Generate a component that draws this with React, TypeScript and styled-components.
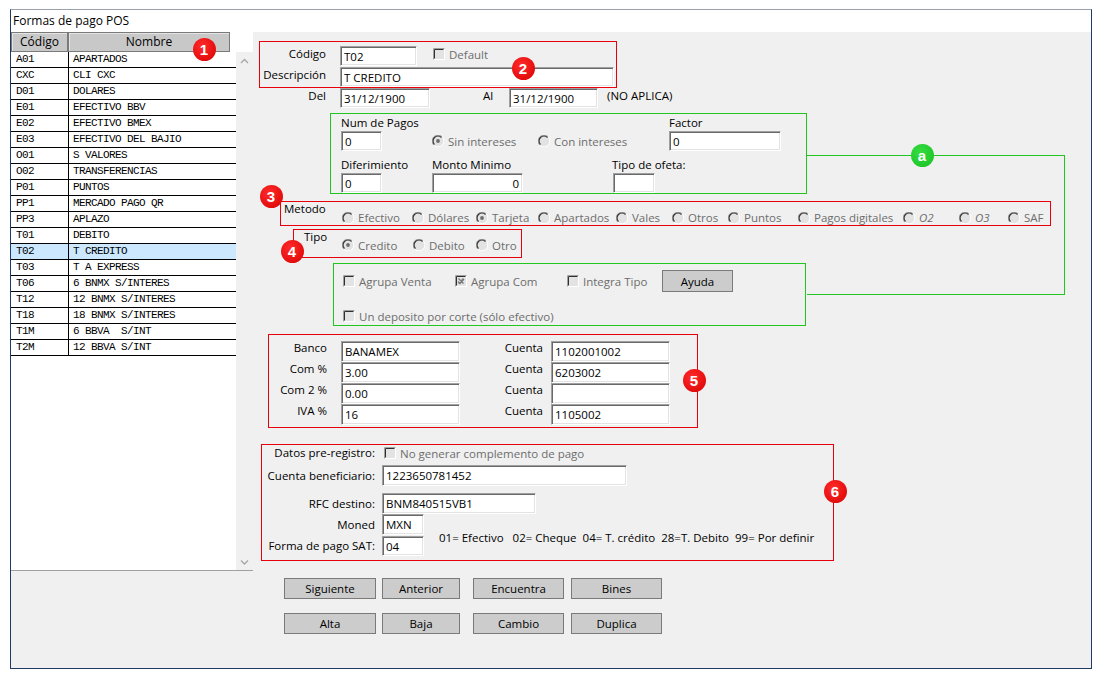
import { Fragment } from "react";
import styled, { createGlobalStyle } from "styled-components";

const GlobalStyle = createGlobalStyle`
  html, body {
    margin: 0;
    padding: 0;
    background: #ffffff;
  }
  body {
    font-family: "Open Sans", "Liberation Sans", sans-serif;
    font-size: 11.5px;
    color: #000000;
  }
  * {
    box-sizing: border-box;
  }
`;

const Window = styled.div`
  position: relative;
  margin: 9px 0 0 10px;
  width: 1082px;
  height: 660px;
  border: 1px solid #1f3b63;
  border-top-color: #9aa3ad;
  display: flex;
  flex-direction: column;
`;

const TitleBar = styled.div`
  height: 22px;
  line-height: 21px;
  padding-left: 2px;
  font-size: 12px;
  background: #ffffff;
`;

const Body = styled.div`
  flex: 1;
  display: flex;
  align-items: flex-start;
  background: #f0f0f0;
`;

/* ---------- left list ---------- */

const ListPanel = styled.div`
  width: 242px;
  height: 539px;
  background: #ffffff;
  display: flex;
  flex-direction: column;
  border-bottom: 1px solid #a0a0a0;
`;

const HeadRow = styled.div`
  display: flex;
  height: 20px;
`;

const HeadCell = styled.div<{ $w: number }>`
  width: ${(p) => p.$w}px;
  background: #c8c8c8;
  border: 1px solid #7a7a7a;
  box-shadow: inset 1px 1px 0 #e4e4e4;
  text-align: center;
  line-height: 18px;
  font-size: 12px;
`;

const ListBody = styled.div`
  flex: 1;
  display: flex;
`;

const Rows = styled.div`
  width: 225px;
`;

const Row = styled.div<{ $selected?: boolean }>`
  display: grid;
  grid-template-columns: 57px 1fr;
  height: 16px;
  border-bottom: 1px solid #000000;
  background: ${(p) => (p.$selected ? "#cce8ff" : "#ffffff")};
  font-family: "Liberation Mono", monospace;
  font-size: 11px;
  letter-spacing: -0.6px;
  line-height: 15px;
`;

const Cell = styled.div`
  padding-left: 5px;
  white-space: pre;
  & + & {
    border-left: 1px solid #000000;
    padding-left: 4px;
  }
`;

const ScrollTrack = styled.div`
  width: 17px;
  display: flex;
  flex-direction: column;
  justify-content: space-between;
  align-items: center;
  padding: 6px 0 5px;
  background: #f0f0f0;
`;

/* ---------- form ---------- */

const Form = styled.div`
  flex: 1;
  display: flex;
  flex-direction: column;
  align-items: flex-start;
`;

const RedBox = styled.div`
  border: 1px solid #e8000b;
`;

const GreenBox = styled.div`
  border: 1px solid #1fc71f;
`;

const Label = styled.span<{ $w?: number; $right?: boolean; $muted?: boolean; $italic?: boolean }>`
  flex: none;
  display: inline-block;
  width: ${(p) => (p.$w ? `${p.$w}px` : "auto")};
  text-align: ${(p) => (p.$right ? "right" : "left")};
  color: ${(p) => (p.$muted ? "#6d6d6d" : "#000000")};
  font-style: ${(p) => (p.$italic ? "italic" : "normal")};
  line-height: 16px;
  white-space: pre;
`;

const TextBox = styled.input<{ $w: number; $h?: number; $right?: boolean }>`
  flex: none;
  width: ${(p) => p.$w}px;
  height: ${(p) => p.$h ?? 20}px;
  margin: 0;
  padding: 0 3px;
  border: 1px solid;
  border-color: #a0a0a0 #ffffff #ffffff #a0a0a0;
  box-shadow: inset 1px 1px 0 #696969, inset -1px -1px 0 #e3e3e3;
  background: #ffffff;
  font: inherit;
  color: #000000;
  text-align: ${(p) => (p.$right ? "right" : "left")};
  outline: none;
`;

const CodeBox = styled(RedBox)`
  margin: 9px 0 0 6px;
  width: 358px;
  padding-top: 4px;
  display: flex;
  flex-direction: column;
  gap: 1px;
`;

const FieldRow = styled.div<{ $gap?: number }>`
  display: flex;
  align-items: flex-start;
  gap: ${(p) => p.$gap ?? 14}px;
`;

const DateRow = styled.div`
  display: flex;
  align-items: flex-start;
`;

const Spacer = styled.span<{ $w: number }>`
  flex: none;
  width: ${(p) => p.$w}px;
`;

const CreditBox = styled(GreenBox)`
  margin: 5px 0 0 77px;
  width: 477px;
  height: 81px;
  padding: 1px 0 0 10px;
`;

const CreditGrid = styled.div<{ $cols: string; $top?: number }>`
  display: grid;
  grid-template-columns: ${(p) => p.$cols};
  align-items: end;
  margin-top: ${(p) => p.$top ?? 0}px;
`;

const Stack = styled.div<{ $indent?: number }>`
  display: flex;
  flex-direction: column;
  align-items: flex-start;
  input {
    margin-left: ${(p) => p.$indent ?? 0}px;
  }
`;

const MethodBox = styled(RedBox)`
  margin: 7px 0 0 27px;
  width: 771px;
  height: 25px;
  padding-left: 3px;
  display: flex;
  align-items: flex-start;
  ${Label} {
    line-height: 14px;
  }
`;

const TypeBox = styled(RedBox)`
  margin: 3px 0 0 40px;
  width: 229px;
  height: 29px;
  padding-left: 10px;
  display: flex;
  align-items: flex-start;
  ${Label} {
    line-height: 14px;
  }
`;

const OptionGroup = styled.div<{ $top: number }>`
  display: flex;
  margin-top: ${(p) => p.$top}px;
`;

const Option = styled.label<{ $w?: number; $h?: number }>`
  flex: none;
  display: flex;
  align-items: center;
  gap: 4px;
  width: ${(p) => (p.$w ? `${p.$w}px` : "auto")};
  height: ${(p) => p.$h ?? 14}px;
  color: #6d6d6d;
  white-space: nowrap;
  svg {
    flex: none;
  }
`;

const OptionsBox = styled(GreenBox)`
  margin: 5px 0 0 80px;
  width: 473px;
  height: 63px;
  padding: 6px 0 0 9px;
`;

const OptionsLine = styled.div<{ $top?: number }>`
  display: flex;
  align-items: center;
  height: 22px;
  margin-top: ${(p) => p.$top ?? 0}px;
`;

const WinButton = styled.button<{ $w: number; $h?: number; $ml?: number }>`
  flex: none;
  width: ${(p) => p.$w}px;
  height: ${(p) => p.$h ?? 21}px;
  margin: 0 0 0 ${(p) => p.$ml ?? 0}px;
  padding: 0;
  background: #cccccc;
  border: 1px solid #7a7a7a;
  font: inherit;
  color: #000000;
`;

const BankBox = styled(RedBox)`
  margin: 8px 0 0 15px;
  width: 430px;
  height: 94px;
  padding: 6px 0 0 0;
  display: grid;
  grid-template-columns: 72px 119px 91px 119px;
  grid-auto-rows: 21px;
  ${Label} {
    line-height: 13px;
  }
`;

const GridLabel = styled(Label)<{ $pr: number }>`
  padding-right: ${(p) => p.$pr}px;
  align-self: start;
`;

const SatBox = styled(RedBox)`
  margin: 16px 0 0 8px;
  width: 573px;
  height: 117px;
  display: flex;
  flex-direction: column;
`;

const SatRow = styled.div<{ $top?: number }>`
  display: flex;
  align-items: center;
  margin-top: ${(p) => p.$top ?? 0}px;
`;

const SatLabel = styled(Label)`
  width: 120px;
  padding-right: 7px;
  text-align: right;
`;

const SatSplit = styled.div`
  display: flex;
  align-items: center;
`;

const SatColumn = styled.div`
  display: flex;
  flex-direction: column;
  gap: 1px;
`;

const Legend = styled.span`
  margin: 4px 0 0 15px;
  white-space: pre;
`;

const ButtonRow = styled.div<{ $top: number }>`
  display: flex;
  margin: ${(p) => p.$top}px 0 0 31px;
`;

/* ---------- annotations ---------- */

const Badge = styled.div<{ $x: number; $y: number; $green?: boolean }>`
  position: absolute;
  left: ${(p) => p.$x - 22.5}px;
  top: ${(p) => p.$y - 21.5}px;
  width: 23px;
  height: 23px;
  border-radius: 50%;
  background: ${(p) =>
    p.$green
      ? "radial-gradient(circle at 40% 35%, #36dc3f, #17c024)"
      : "radial-gradient(circle at 40% 35%, #ff2b2b, #d90000)"};
  color: #ffffff;
  font-family: "Liberation Sans", Arial, sans-serif;
  font-weight: bold;
  font-size: 15px;
  line-height: 23px;
  text-align: center;
`;

const Connector = styled.div`
  position: absolute;
  left: 796px;
  top: 145px;
  width: 258px;
  height: 140px;
  border: 1px solid #1fc71f;
  border-left: none;
`;

function RadioMark({ on }: { on?: boolean }) {
  return (
    <svg width="12" height="12" viewBox="0 0 12 12">
      <circle cx="6" cy="6" r="5.5" fill="#e3e3e3" />
      <path d="M10.2 1.8 A5.9 5.9 0 0 0 1.8 10.2" fill="none" stroke="#a0a0a0" strokeWidth="1" />
      <path d="M9.5 2.5 A4.9 4.9 0 0 0 2.5 9.5" fill="none" stroke="#303030" strokeWidth="1.1" />
      <path d="M1.8 10.2 A5.9 5.9 0 0 0 10.2 1.8" fill="none" stroke="#ffffff" strokeWidth="1" />
      {on && <circle cx="6" cy="6" r="1.9" fill="#6d6d6d" />}
    </svg>
  );
}

function CheckMark({ on }: { on?: boolean }) {
  return (
    <svg width="12" height="12" viewBox="0 0 12 12">
      <rect x="0" y="0" width="12" height="12" fill="#ffffff" />
      <rect x="1" y="1" width="10" height="10" fill="#e3e3e3" />
      <path d="M0.5 11.5 V0.5 H11.5" fill="none" stroke="#a0a0a0" />
      <path d="M1.5 10.5 V1.5 H10.5" fill="none" stroke="#303030" />
      {on && <path d="M3.5 3.5 L8.5 8.5 M8.5 3.5 L3.5 8.5 M3 6.5 L5 8.5 L9 4" fill="none" stroke="#7a7a7a" strokeWidth="1.3" />}
    </svg>
  );
}

function Chevron({ down }: { down?: boolean }) {
  return (
    <svg width="9" height="6" viewBox="0 0 9 6">
      <path d={down ? "M1 1.5 L4.5 5 L8 1.5" : "M1 5 L4.5 1.5 L8 5"} fill="none" stroke="#a6a6a6" strokeWidth="1.3" />
    </svg>
  );
}

interface IPayment {
  code: string;
  name: string;
}

const payments: IPayment[] = [
  { code: "A01", name: "APARTADOS" },
  { code: "CXC", name: "CLI CXC" },
  { code: "D01", name: "DOLARES" },
  { code: "E01", name: "EFECTIVO BBV" },
  { code: "E02", name: "EFECTIVO BMEX" },
  { code: "E03", name: "EFECTIVO DEL BAJIO" },
  { code: "O01", name: "S VALORES" },
  { code: "O02", name: "TRANSFERENCIAS" },
  { code: "P01", name: "PUNTOS" },
  { code: "PP1", name: "MERCADO PAGO QR" },
  { code: "PP3", name: "APLAZO" },
  { code: "T01", name: "DEBITO" },
  { code: "T02", name: "T CREDITO" },
  { code: "T03", name: "T A EXPRESS" },
  { code: "T06", name: "6 BNMX S/INTERES" },
  { code: "T12", name: "12 BNMX S/INTERES" },
  { code: "T18", name: "18 BNMX S/INTERES" },
  { code: "T1M", name: "6 BBVA  S/INT" },
  { code: "T2M", name: "12 BBVA S/INT" },
];

const methods: { label: string; w?: number; on?: boolean; italic?: boolean }[] = [
  { label: "Efectivo", w: 70 },
  { label: "Dólares", w: 64 },
  { label: "Tarjeta", w: 62, on: true },
  { label: "Apartados", w: 78 },
  { label: "Vales", w: 56 },
  { label: "Otros", w: 56 },
  { label: "Puntos", w: 70 },
  { label: "Pagos digitales", w: 105 },
  { label: "O2", w: 56, italic: true },
  { label: "O3", w: 49, italic: true },
  { label: "SAF" },
];

const bank = [
  { label: "Banco", value: "BANAMEX", account: "1102001002" },
  { label: "Com %", value: "3.00", account: "6203002" },
  { label: "Com 2 %", value: "0.00", account: "" },
  { label: "IVA %", value: "16", account: "1105002" },
];

function App() {
  return (
    <>
      <GlobalStyle />
      <Window>
        <TitleBar>Formas de pago POS</TitleBar>
        <Body>
          <ListPanel>
            <HeadRow>
              <HeadCell $w={57}>Código</HeadCell>
              <HeadCell $w={162}>Nombre</HeadCell>
            </HeadRow>
            <ListBody>
              <Rows>
                {payments.map((p) => (
                  <Row key={p.code} $selected={p.code === "T02"}>
                    <Cell>{p.code}</Cell>
                    <Cell>{p.name}</Cell>
                  </Row>
                ))}
              </Rows>
              <ScrollTrack>
                <Chevron />
                <Chevron down />
              </ScrollTrack>
            </ListBody>
          </ListPanel>

          <Form>
            <CodeBox>
              <FieldRow>
                <Label $w={66} $right>Código</Label>
                <TextBox readOnly value="T02" $w={77} />
                <Option $h={16} style={{ marginLeft: 2 }}>
                  <CheckMark />
                  Default
                </Option>
              </FieldRow>
              <FieldRow>
                <Label $w={66} $right>Descripción</Label>
                <TextBox readOnly value="T CREDITO" $w={274} />
              </FieldRow>
            </CodeBox>

            <DateRow>
              <Label $w={73} $right>Del</Label>
              <Spacer $w={14} />
              <TextBox readOnly value="31/12/1900" $w={90} />
              <Spacer $w={53} />
              <Label $w={26}>Al</Label>
              <TextBox readOnly value="31/12/1900" $w={89} />
              <Spacer $w={9} />
              <Label>(NO APLICA)</Label>
            </DateRow>

            <CreditBox>
              <CreditGrid $cols="91px 106px 131px 1fr">
                <Stack>
                  <Label>Num de Pagos</Label>
                  <TextBox readOnly value="0" $w={41} />
                </Stack>
                <Option $h={20}>
                  <RadioMark on />
                  Sin intereses
                </Option>
                <Option $h={20}>
                  <RadioMark />
                  Con intereses
                </Option>
                <Stack>
                  <Label>Factor</Label>
                  <TextBox readOnly value="0" $w={112} />
                </Stack>
              </CreditGrid>
              <CreditGrid $cols="91px 180px 1fr" $top={6}>
                <Stack>
                  <Label>Diferimiento</Label>
                  <TextBox readOnly value="0" $w={41} />
                </Stack>
                <Stack>
                  <Label>Monto Minimo</Label>
                  <TextBox readOnly value="0" $w={91} $right />
                </Stack>
                <Stack $indent={1}>
                  <Label>Tipo de ofeta:</Label>
                  <TextBox readOnly value="" $w={42} />
                </Stack>
              </CreditGrid>
            </CreditBox>

            <MethodBox>
              <Label $w={58}>Metodo</Label>
              <OptionGroup $top={9}>
                {methods.map((m) => (
                  <Option key={m.label} $w={m.w}>
                    <RadioMark on={m.on} />
                    <Label $muted $italic={m.italic}>{m.label}</Label>
                  </Option>
                ))}
              </OptionGroup>
            </MethodBox>

            <TypeBox>
              <Label $w={38}>Tipo</Label>
              <OptionGroup $top={8}>
                <Option $w={71}>
                  <RadioMark on />
                  Credito
                </Option>
                <Option $w={63}>
                  <RadioMark />
                  Debito
                </Option>
                <Option>
                  <RadioMark />
                  Otro
                </Option>
              </OptionGroup>
            </TypeBox>

            <OptionsBox>
              <OptionsLine>
                <Option $w={112}>
                  <CheckMark />
                  Agrupa Venta
                </Option>
                <Option $w={112}>
                  <CheckMark on />
                  Agrupa Com
                </Option>
                <Option $w={95}>
                  <CheckMark />
                  Integra Tipo
                </Option>
                <WinButton $w={71} $h={22}>Ayuda</WinButton>
              </OptionsLine>
              <OptionsLine $top={13}>
                <Option>
                  <CheckMark />
                  Un deposito por corte (sólo efectivo)
                </Option>
              </OptionsLine>
            </OptionsBox>

            <BankBox>
              {bank.map((b) => (
                <Fragment key={b.label}>
                  <GridLabel $right $pr={14}>{b.label}</GridLabel>
                  <TextBox readOnly value={b.value} $w={119} $h={21} />
                  <GridLabel $right $pr={8}>Cuenta</GridLabel>
                  <TextBox readOnly value={b.account} $w={119} $h={21} />
                </Fragment>
              ))}
            </BankBox>

            <SatBox>
              <SatRow>
                <SatLabel>Datos pre-registro:</SatLabel>
                <Option $h={16} style={{ marginLeft: 2 }}>
                  <CheckMark />
                  No generar complemento de pago
                </Option>
              </SatRow>
              <SatRow $top={4}>
                <SatLabel>Cuenta beneficiario:</SatLabel>
                <TextBox readOnly value="1223650781452" $w={245} $h={21} />
              </SatRow>
              <SatRow $top={7}>
                <SatLabel>RFC destino:</SatLabel>
                <TextBox readOnly value="BNM840515VB1" $w={154} $h={21} />
              </SatRow>
              <SatSplit>
                <SatColumn>
                  <SatRow>
                    <SatLabel>Moned</SatLabel>
                    <TextBox readOnly value="MXN" $w={42} $h={21} />
                  </SatRow>
                  <SatRow>
                    <SatLabel>Forma de pago SAT:</SatLabel>
                    <TextBox readOnly value="04" $w={42} $h={20} />
                  </SatRow>
                </SatColumn>
                <Legend>01= Efectivo   02= Cheque  04= T. crédito  28=T. Debito  99= Por definir</Legend>
              </SatSplit>
            </SatBox>

            <ButtonRow $top={17}>
              <WinButton $w={92}>Siguiente</WinButton>
              <WinButton $w={78} $ml={6}>Anterior</WinButton>
              <WinButton $w={91} $ml={13}>Encuentra</WinButton>
              <WinButton $w={91} $ml={7}>Bines</WinButton>
            </ButtonRow>
            <ButtonRow $top={14}>
              <WinButton $w={92}>Alta</WinButton>
              <WinButton $w={78} $ml={6}>Baja</WinButton>
              <WinButton $w={91} $ml={13}>Cambio</WinButton>
              <WinButton $w={91} $ml={7}>Duplica</WinButton>
            </ButtonRow>
          </Form>
        </Body>

        <Connector />
        <Badge $x={204} $y={49}>1</Badge>
        <Badge $x={523} $y={68}>2</Badge>
        <Badge $x={271} $y={196}>3</Badge>
        <Badge $x={292} $y={251}>4</Badge>
        <Badge $x={694} $y={380}>5</Badge>
        <Badge $x={835} $y={491}>6</Badge>
        <Badge $x={922} $y={155} $green>a</Badge>
      </Window>
    </>
  );
}

export default App;
